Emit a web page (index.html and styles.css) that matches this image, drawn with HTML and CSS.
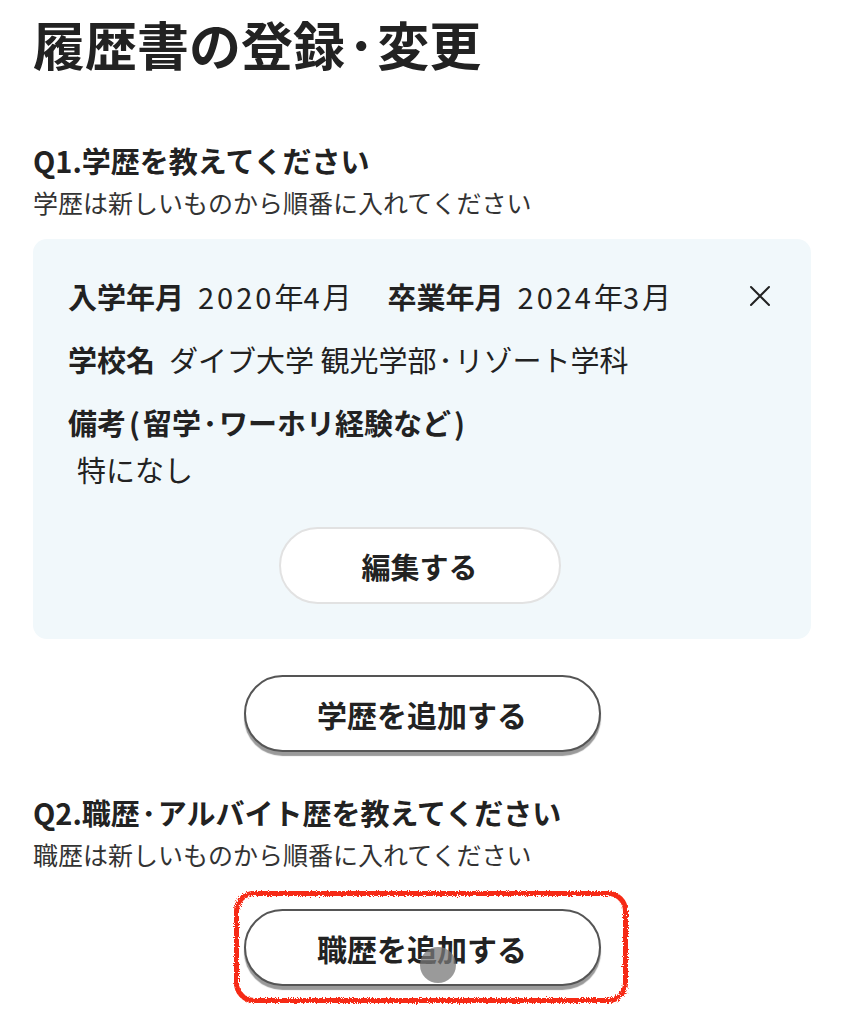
FILE: index.html
```html
<!DOCTYPE html>
<html lang="ja">
<head>
    <meta charset="UTF-8">
    <title>履歴書の登録・変更</title>
    <link rel="stylesheet" href="styles.css">
</head>
<body>
    <svg class="defs" width="0" height="0" aria-hidden="true">
        <filter id="rough">
            <feTurbulence type="fractalNoise" baseFrequency="0.9" numOctaves="2" result="noise"/>
            <feDisplacementMap in="SourceGraphic" in2="noise" scale="5"/>
        </filter>
    </svg>

    <main class="page">
        <h1 class="page-title">履歴書の登録<span class="mid">･</span>変更</h1>

        <section class="question">
            <h2 class="question-title">Q1.学歴を教えてください</h2>
            <p class="question-note">学歴は新しいものから順番に入れてください</p>

            <div class="entry-card">
                <div class="entry-row entry-row-top">
                    <div>
                        <span class="entry-label">入学年月</span><span class="num">2020</span>年<span class="num">4</span>月<span class="entry-gap"></span><span class="entry-label">卒業年月</span><span class="num">2024</span>年<span class="num">3</span>月
                    </div>
                    <button class="entry-close" aria-label="削除">
                        <svg width="22" height="22" viewBox="0 0 22 22">
                            <path d="M2 2 L20 20 M20 2 L2 20" stroke="#222" stroke-width="2" stroke-linecap="round" fill="none"/>
                        </svg>
                    </button>
                </div>
                <div class="entry-row"><span class="entry-label">学校名</span>ダイブ大学 観光学部<span class="mid">･</span>リゾート学科</div>
                <div class="entry-row"><span class="entry-title">備考<span class="paren">(</span>留学<span class="mid">･</span>ワーホリ経験など<span class="paren">)</span></span></div>
                <div class="entry-row entry-row-note">特になし</div>
                <div class="entry-actions">
                    <button class="btn-edit">編集する</button>
                </div>
            </div>

            <div class="add-wrap">
                <button class="btn-add">学歴を追加する</button>
            </div>
        </section>

        <section class="question">
            <h2 class="question-title question-title-2">Q2.職歴<span class="mid">･</span>アルバイト歴を教えてください</h2>
            <p class="question-note">職歴は新しいものから順番に入れてください</p>

            <div class="add-wrap add-wrap-last">
                <div class="add-target">
                    <button class="btn-add">職歴を追加する</button>
                    <span class="highlight"></span>
                    <span class="tap-dot"></span>
                </div>
            </div>
        </section>
    </main>
</body>
</html>
```

FILE: styles.css
```css
body {
    margin: 0;
    padding: 0;
    background-color: #fff;
    color: #222;
    font-family: "Noto Sans CJK JP", "Noto Sans", sans-serif;
}
.defs {
    position: absolute;
}
.page {
    padding: 14px 32px 40px 33px;
}
.page-title {
    margin: 0;
    font-size: 52px;
    line-height: 60px;
    font-weight: 700;
}
.mid {
    margin: 0 0.06em;
}
.question-title {
    margin: 66px 0 0;
    font-size: 29px;
    line-height: 40px;
    font-weight: 700;
}
.question-title-2 {
    margin-top: 40px;
}
.question-note {
    margin: 5px 0 0;
    font-size: 25px;
    line-height: 34px;
    color: #333;
}
.entry-card {
    margin-top: 20px;
    padding: 37px 40px 35px 35px;
    background-color: #f1f8fb;
    border-radius: 14px;
}
.entry-row {
    font-size: 29px;
    line-height: 40px;
    margin-top: 23px;
}
.entry-row-top {
    margin-top: 0;
    display: flex;
    justify-content: space-between;
    align-items: center;
}
.entry-row-note {
    margin-top: 7px;
    padding-left: 9px;
}
.entry-label {
    font-weight: 700;
    margin-right: 14px;
}
.entry-title {
    font-weight: 700;
}
.num {
    letter-spacing: 3px;
}
.paren {
    margin: 0 3px;
}
.entry-gap {
    display: inline-block;
    width: 36px;
}
.entry-close {
    border: none;
    background: none;
    padding: 0;
    width: 22px;
    height: 22px;
}
.entry-actions {
    margin-top: 38px;
    display: flex;
    justify-content: center;
}
.btn-edit {
    width: 282px;
    height: 77px;
    border: 2px solid #e2e2e2;
    border-radius: 40px;
    background-color: #fff;
    font-family: inherit;
    font-size: 29px;
    font-weight: 700;
    color: #222;
}
.add-wrap {
    margin-top: 36px;
    display: flex;
    justify-content: center;
}
.add-wrap-last {
    margin-top: 38px;
}
.add-target {
    position: relative;
}
.btn-add {
    width: 357px;
    height: 77px;
    border: 2px solid #555;
    border-radius: 40px;
    background-color: #fff;
    box-shadow: 0 4px 1px #9a9a9a;
    font-family: inherit;
    font-size: 30px;
    font-weight: 700;
    color: #222;
}
.highlight {
    position: absolute;
    left: -10px;
    top: -18px;
    right: -27px;
    bottom: -17px;
    border: 5px solid #f62b14;
    border-radius: 20px;
    filter: url(#rough);
}
.tap-dot {
    position: absolute;
    left: 176px;
    top: 38px;
    width: 36px;
    height: 36px;
    border-radius: 50%;
    background-color: rgba(120, 120, 120, 0.75);
}
```
